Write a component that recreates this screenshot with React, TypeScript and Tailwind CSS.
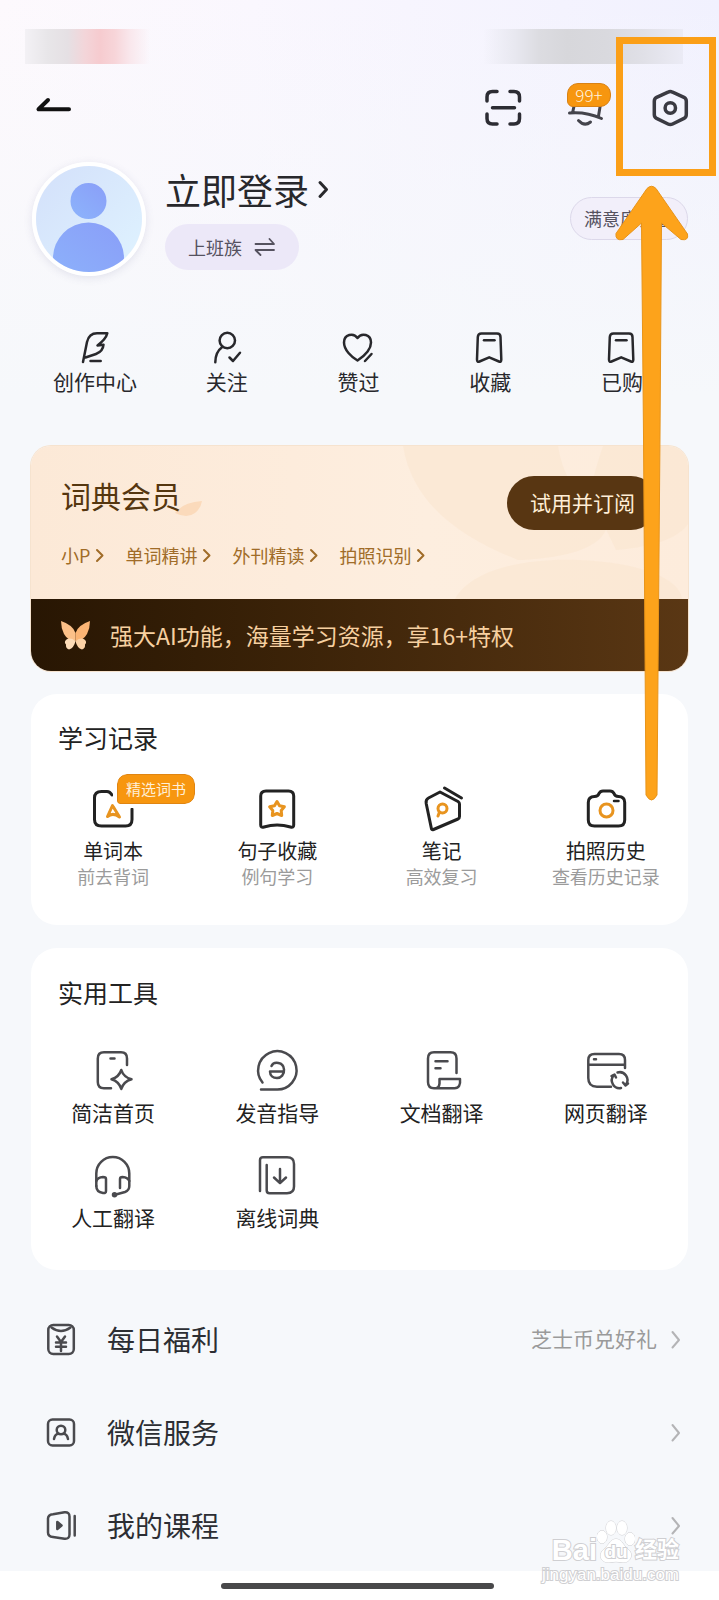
import type { ReactNode } from "react";

type IconProps = {
  size: number;
  stroke?: number;
  className?: string;
  children: ReactNode;
};

function Icon({ size, stroke = 2, className = "", children }: IconProps) {
  return (
    <svg
      width={size}
      height={size}
      viewBox={`0 0 ${size} ${size}`}
      fill="none"
      stroke="currentColor"
      strokeWidth={stroke}
      strokeLinecap="round"
      strokeLinejoin="round"
      aria-hidden="true"
      className={`shrink-0 overflow-visible ${className}`}
    >
      {children}
    </svg>
  );
}

const bookmark = (
  <Icon size={36} stroke={2.5}>
    <path d="M9.500 3.500H25Q28.500 3.500 28.500 7L29.300 29.500Q29.300 32.500 27 31.500L17.200 27.300L7.500 31.500Q5 32.500 5 29.500L5.800 7Q6 3.500 9.500 3.500Z" />
    <path d="M12 10.300H22.500" />
  </Icon>
);

const shortcuts = [
  {
    label: "创作中心",
    icon: (
      <Icon size={36} stroke={2.5}>
        <path d="M6 32L10 12Q12 3.300 20 3.300H30.300Q29 9 20.500 15.500L26.500 14.700Q26 21.500 19 24L8.500 27.500" />
        <path d="M13.500 31H23.700" />
      </Icon>
    ),
  },
  {
    label: "关注",
    icon: (
      <Icon size={36} stroke={2.5}>
        <circle cx="18.300" cy="10.500" r="7.700" />
        <path d="M13 17.300Q6.500 22 6.300 32.300M20.500 27.500L24 31L31 22.700" />
      </Icon>
    ),
  },
  {
    label: "赞过",
    icon: (
      <Icon size={36} stroke={2.5}>
        <path d="M17.500 30.500C11.500 27 4 20 4 12.500C4 4.300 13.500 2.300 17.500 8C21.500 2.300 31 4.300 31 12.500C31 20 23.500 26.500 17.500 30.500Z" />
        <path d="M25 31L31.500 24" />
      </Icon>
    ),
  },
  { label: "收藏", icon: bookmark },
  { label: "已购", icon: bookmark },
];

const memberLinks = ["小P", "单词精讲", "外刊精读", "拍照识别"];

const records = [
  {
    label: "单词本",
    hint: "前去背词",
    badge: "精选词书",
    icon: (
      <Icon size={44} stroke={3}>
        <path d="M21 8Q19 4.500 16 4.500H10.500Q3.500 4.500 3.500 11V32.500Q3.500 39 10.500 39H34.500Q41 39 41 32.500V22" />
        <path d="M16.500 29.500L21.500 18.500L28.500 30Q22 25 16.500 29.500Z" className="stroke-[#e8941f]" />
      </Icon>
    ),
  },
  {
    label: "句子收藏",
    hint: "例句学习",
    icon: (
      <Icon size={44} stroke={3}>
        <path d="M11 4H33.500Q38.700 4 38.700 9V38Q38.700 41 35.500 40Q22 36 9 40Q5.700 41 5.700 38V9Q5.700 4 11 4Z" />
        <path
          d="M22 14.500L24.500 18.800L29.400 19.800L26.200 23.500L26.700 28.500L22 26.500L17.300 28.500L17.800 23.500L14.600 19.800L19.500 18.800Z"
          className="stroke-[#e8941f]"
        />
      </Icon>
    ),
  },
  {
    label: "笔记",
    hint: "高效复习",
    icon: (
      <Icon size={44} stroke={3}>
        <path d="M20 5L38 14.500Q39.500 15.500 39.500 17V29.500Q39.500 31.500 38 32L13.500 42.500Q11.500 43.200 11.300 41L6.200 16.500Q5.500 12.500 8.500 11Z" />
        <path d="M24.500 1L41.500 11" />
        <circle cx="22.500" cy="21.500" r="4.500" className="stroke-[#e8941f]" />
        <path d="M19.500 25L18 29" className="stroke-[#e8941f]" />
      </Icon>
    ),
  },
  {
    label: "拍照历史",
    hint: "查看历史记录",
    icon: (
      <Icon size={44} stroke={3}>
        <path d="M10.500 9.500Q14 9.500 15 6.500Q16.200 4 19 4H26Q28.800 4 30 6.500Q31 9.500 34.500 9.500Q40.700 9.500 40.700 15.500V33Q40.700 39 34.500 39H10.500Q4.300 39 4.300 33V15.500Q4.300 9.500 10.500 9.500Z" />
        <circle cx="22.500" cy="23.500" r="6.500" className="stroke-[#e8941f]" />
        <path d="M30 14H34.500" strokeWidth="2.500" />
      </Icon>
    ),
  },
];

const tools = [
  {
    label: "简洁首页",
    icon: (
      <Icon size={44} stroke={2.5}>
        <path d="M36 17V10.500Q36 4.300 30 4.300H13Q6.800 4.300 6.800 10.500V34Q6.800 40.200 13 40.200H20M19.500 10.500H23.500" />
        <path d="M30.300 22Q32.500 29 40.500 31.300Q32.500 33.600 30.300 41Q28 33.600 20.500 31.300Q28 29 30.300 22Z" />
      </Icon>
    ),
  },
  {
    label: "发音指导",
    icon: (
      <Icon size={44} stroke={2.5}>
        <path d="M7.500 34.500A19.200 19.200 0 1 1 21.800 41.500H6" />
        <path d="M16.500 18C18.500 13.300 28.500 13.500 29 21.500C29.500 26.500 26 30 22 30C18 30 15 27.500 15 23.500H28.500" />
      </Icon>
    ),
  },
  {
    label: "文档翻译",
    icon: (
      <Icon size={44} stroke={2.5}>
        <path d="M36.500 25V10.500Q36.500 4.300 30.500 4.300H14Q8 4.300 8 10.500V34Q8 40.200 14 40.200H34.500Q41 40.200 40 31H19.500V35.500Q19 40 16 40.200" />
        <path d="M15.500 13.300H27.500M15.500 20.300H20.500" />
      </Icon>
    ),
  },
  {
    label: "网页翻译",
    icon: (
      <Icon size={44} stroke={2.5}>
        <path d="M41 20V12Q41 6 35 6H10.500Q4.300 6 4.300 12V30Q4.300 38.700 13 38.700H27M4.300 16.700H41M10 11.300H12" />
        <path d="M29.500 27.500A7.800 7.800 0 0 0 37 40M33.500 24.500A7.800 7.800 0 0 1 42 36.500" />
        <path d="M27.500 28L30.500 26.500L32 29.500M44 35.500L41.500 37.500L39 34.500" />
      </Icon>
    ),
  },
  {
    label: "人工翻译",
    icon: (
      <Icon size={44} stroke={2.5}>
        <path d="M5.300 33V20.500A16.500 16.500 0 0 1 38.300 20.500V33Q38.300 37.500 34 39L24 41.700" />
        <path d="M5.300 28Q6.500 24.500 12 24Q15 24 15 26V38Q15 40.500 12 40Q5.300 39 5.300 33M29 35V26Q29 24 31.500 24Q37 24.500 38.300 28" />
        <circle cx="23.500" cy="41.700" r="1.500" fill="currentColor" />
      </Icon>
    ),
  },
  {
    label: "离线词典",
    icon: (
      <Icon size={44} stroke={2.5}>
        <path d="M5 38V7Q5 4.300 8 4.300H32Q39 4.300 39 11V33.500Q39 40.200 32 40.200H14.500Q11.700 40.200 11.700 37.500V12" />
        <path d="M25 16V30M19 24.500L25 30.200L31 24.500" />
      </Icon>
    ),
  },
];

const menu = [
  {
    label: "每日福利",
    note: "芝士币兑好礼",
    icon: (
      <Icon size={32} stroke={2.5}>
        <rect x="3.300" y="2" width="25.500" height="29" rx="5" />
        <path d="M6.500 4.500Q16 11.500 25.500 4.500M12 13.500L16 19L20 13.500M11 19.500H21M11 23.700H21M16 19V28" />
      </Icon>
    ),
  },
  {
    label: "微信服务",
    icon: (
      <Icon size={32} stroke={2.5}>
        <rect x="3" y="3.500" width="26" height="26" rx="4.500" />
        <circle cx="16" cy="14" r="4.300" />
        <path d="M9 23Q10 18 13.500 17.800M23 23Q22 18 18.500 17.800" />
      </Icon>
    ),
  },
  {
    label: "我的课程",
    icon: (
      <Icon size={32} stroke={2.5}>
        <path d="M8 5.200L19.500 3.300Q24.500 2.800 24.500 7.500V25.500Q24.500 30.200 19.500 29.700L8 28Q3 27.500 3 23.500V9.500Q3 5.800 8 5.200ZM29.700 7V26.500" />
        <path d="M12.300 13L16.500 16.500L12.300 20Z" fill="currentColor" />
      </Icon>
    ),
  },
];

function SectionTitle({ children }: { children: ReactNode }) {
  return <h2 className="px-[27px] text-[25px] leading-[30px] text-[#222]">{children}</h2>;
}

function StatusBar() {
  return (
    <div className="flex justify-between px-[25px] pt-[29px]">
      <div className="h-[35px] w-[125px] bg-[linear-gradient(90deg,#f3f1f5_0%,#e8e6e9_18%,#e5e0e4_34%,#f3d5d9_48%,#f6cbcf_60%,#f7d5d9_72%,#f9e7ec_84%,transparent_100%)]" />
      <div className="mr-[11px] h-[35px] w-[200px] bg-[linear-gradient(90deg,transparent_0%,#e8e8f0_16%,#dcdce1_28%,#d7d7db_42%,#d9d9de_62%,#e0e0e7_80%,#ebebf5_100%)]" />
    </div>
  );
}

function TopBar() {
  return (
    <header className="flex h-[88px] items-center justify-between pr-[29px] pl-[36px]">
      <button type="button" aria-label="返回" className="text-[#111]">
        <Icon size={36} stroke={4}>
          <path d="M12 10L2.500 19.300H33" />
        </Icon>
      </button>
      <div className="flex items-center gap-[42px]">
        <button type="button" aria-label="扫一扫" className="text-[#2c2c33]">
          <Icon size={40} stroke={3.5}>
            <path d="M3 13V9Q3 3.500 8.500 3.500H13M26 3.500H30Q35.500 3.500 35.500 9V13M35.500 26V30.500Q35.500 36 30 36H26M13 36H8.500Q3 36 3 30.500V26M8.500 19.700H30.500" />
          </Icon>
        </button>
        <button type="button" aria-label="消息" className="relative text-[#44444c]">
          <Icon size={44} stroke={3}>
            <path d="M8.500 18L6.500 27M34.500 18L32.500 30M3.500 27Q20 25.500 35.500 32.500M12.500 34.500Q18.500 41 24.500 36" />
          </Icon>
          <span className="absolute -top-[3px] left-px h-6 w-11 rounded-[11px] rounded-bl-[6px] border border-[#d98214] bg-[#f7960f] text-center text-[17px] leading-[22px] font-light text-[#fff3df]">
            99+
          </span>
        </button>
        <button type="button" aria-label="设置" className="text-[#3a3a42]">
          <Icon size={38} stroke={3.5}>
            <path d="M16 3.200Q18.300 2 20.600 3.200L32 8.300Q34.300 9.500 34.300 12.200V25.500Q34.300 28.200 32 29.400L20.600 35Q18.300 36.200 16 35L4.600 29.400Q2.300 28.200 2.300 25.500V12.200Q2.300 9.500 4.600 8.300Z" />
            <circle cx="18.300" cy="19" r="5.200" />
          </Icon>
        </button>
      </div>
    </header>
  );
}

function Profile() {
  return (
    <section className="flex items-start pt-[10px] pr-[31px] pl-[32px]">
      <div className="size-[114px] shrink-0 overflow-hidden rounded-full border-4 border-white shadow-[0_2px_8px_rgba(90,90,140,0.14)]">
        <svg viewBox="0 0 106 106" className="size-full" role="img" aria-label="头像">
          <defs>
            <linearGradient id="sky" x1="0" y1="0" x2="1" y2="1">
              <stop offset="0" stopColor="#d3e0fa" />
              <stop offset="1" stopColor="#dff3ff" />
            </linearGradient>
            <linearGradient id="person" x1="1" y1="0" x2="0.200" y2="1">
              <stop offset="0" stopColor="#8a9ef8" />
              <stop offset="1" stopColor="#8cb2fb" />
            </linearGradient>
          </defs>
          <rect width="106" height="106" fill="url(#sky)" />
          <circle cx="52.500" cy="35" r="18" fill="url(#person)" />
          <circle cx="52.500" cy="92" r="35.500" fill="url(#person)" />
        </svg>
      </div>
      <div className="ml-[19px] flex grow flex-col items-start gap-[8px]">
        <button type="button" className="flex h-[54px] items-center gap-[7px] text-[36px] leading-[54px] text-[#28282c]">
          立即登录
          <Icon size={16} stroke={3}>
            <path d="M4 1.500L10.500 8.500L4 15.500" />
          </Icon>
        </button>
        <button
          type="button"
          className="flex h-[46px] items-center gap-3 rounded-full bg-[#ece8f8] px-[23px] text-[18px] text-[#55525f]"
        >
          上班族
          <Icon size={22} stroke={1.8}>
            <path d="M1.500 8H20L15.500 3M20 14H1.500L6.500 19" />
          </Icon>
        </button>
      </div>
      <button
        type="button"
        className="mt-[35px] h-[43px] rounded-full border border-[#dcd8ea] bg-[#f2effa] px-[13px] text-[18px] text-[#55525f]"
      >
        满意度调查
      </button>
    </section>
  );
}

function Member() {
  return (
    <section className="mx-[31px] mt-[50px] overflow-hidden rounded-[20px] shadow-[0_0_0_1px_#f6e3cf]">
      <div className="relative h-[153px] bg-[linear-gradient(90deg,#fce9d7_0%,#fdecdc_40%,#fdeedf_60%,#fdecdc_100%)] px-[30px] pt-[26px]">
        <svg
          viewBox="0 0 290 153"
          aria-hidden="true"
          className="absolute top-0 right-0 h-full w-[290px]"
          fill="#fae6d0"
          fillOpacity="0.600"
        >
          <path d="M5 0C15 60 65 92 120 114C170 112 225 100 205 60C175 50 165 28 160 0Z" />
          <path d="M205 0C200 15 195 30 192 50L218 104C262 100 282 90 290 78V0Z" />
          <path d="M57 153C70 128 115 112 180 114C240 116 282 132 284 153Z" />
        </svg>
        <div className="relative flex items-start justify-between">
          <div>
            <h2 className="relative w-fit text-[30px] leading-[46px] text-[#55360f]">
              <svg
                width="28"
                height="18"
                viewBox="0 0 28 18"
                aria-hidden="true"
                className="absolute -right-[22px] bottom-0"
              >
                <path d="M0 13Q8 2 27 1Q26 8 20 13Q12 19 0 13Z" fill="#fbdabb" />
              </svg>
              <span className="relative">词典会员</span>
            </h2>
            <div className="mt-[23px] flex gap-5">
              {memberLinks.map((name) => (
                <a key={name} href="#" className="flex items-center gap-[5px] text-[18px] leading-[28px] text-[#a06c28]">
                  {name}
                  <Icon size={10} stroke={2}>
                    <path d="M2 0L7.500 5.500L2 11" />
                  </Icon>
                </a>
              ))}
            </div>
          </div>
          <button
            type="button"
            className="mt-[4px] h-[54px] rounded-full bg-[#583612] px-[23px] text-[21px] text-[#ffeed6]"
          >
            试用并订阅
          </button>
        </div>
      </div>
      <a
        href="#"
        className="flex h-[72px] items-center gap-[19px] bg-linear-to-r from-[#281603] to-[#5a3714] pl-[29px] text-[23px] text-[#f7d0a0]"
      >
        <svg width="31" height="30" viewBox="0 0 31 30" aria-hidden="true" className="shrink-0">
          <path d="M1 1Q13 5 15.500 13V21Q8 21 4 14Q1 8 1 1Z" fill="#fcc088" />
          <path d="M30 1Q18 5 15.500 13V21Q23 21 27 14Q30 8 30 1Z" fill="#fbb474" />
          <path d="M15.500 21Q10 17 6.500 19.500Q3.500 22 6 24.500Q5.500 28.500 9 29.500Q14 28 15.500 21Z" fill="#fddcb8" />
          <path d="M15.500 21Q21 17 24.500 19.500Q27.500 22 25 24.500Q25.500 28.500 22 29.500Q17 28 15.500 21Z" fill="#fcd2a6" />
        </svg>
        强大AI功能，海量学习资源，享16+特权
      </a>
    </section>
  );
}

function Watermark() {
  return (
    <div className="absolute right-[40px] bottom-[15px] font-['Liberation_Sans','Noto_Sans_CJK_SC',sans-serif] text-white [paint-order:stroke_fill] [-webkit-text-stroke:2px_#cfcfd2]">
      <div className="flex items-end justify-end text-[29px] leading-[30px] font-bold">
        <span>Bai</span>
        <svg width="38" height="44" viewBox="0 0 38 44" aria-hidden="true" className="mb-px" fill="#fff" stroke="#cfcfd2" strokeWidth="1">
          <ellipse cx="5" cy="17" rx="5" ry="6.500" />
          <ellipse cx="14" cy="8" rx="5" ry="7" />
          <ellipse cx="25" cy="8" rx="5" ry="7" />
          <ellipse cx="33" cy="19" rx="5" ry="6.500" />
          <path d="M19 19C25 19 27 27 32 30C37 35 33 43 26 42.500Q19 41 12 42.500C4 43 1 35 6 30C11 27 13 19 19 19Z" />
          <text x="19" y="38" textAnchor="middle" fontSize="19" fontWeight="700" strokeWidth="2">
            du
          </text>
        </svg>
        <span className="text-[22px]">经验</span>
      </div>
      <div className="text-right text-[17px] leading-[20px]">jingyan.baidu.com</div>
    </div>
  );
}

export default function App() {
  return (
    <div className="relative flex min-h-screen flex-col overflow-hidden bg-[#f6f8fb] font-['Noto_Sans_CJK_SC',sans-serif] text-[#222]">
      <div className="bg-[linear-gradient(180deg,transparent_0%,#f6f8fb_100%),linear-gradient(90deg,#fdf9fd_0%,#faf7fe_35%,#f1f1fe_100%)]">
        <StatusBar />
        <TopBar />
        <Profile />
        <nav className="mt-[54px] grid grid-cols-5 pr-[31px] pl-[29px]">
          {shortcuts.map((item) => (
            <a key={item.label} href="#" className="flex flex-col items-center text-[21px] leading-[30px] text-[#28282c]">
              {item.icon}
              {item.label}
            </a>
          ))}
        </nav>
      </div>

      <main className="grow">
        <Member />

        <section className="mx-[31px] mt-[23px] rounded-[26px] bg-white pt-[28px] pb-[38px]">
          <SectionTitle>学习记录</SectionTitle>
          <div className="mt-[35px] grid grid-cols-4">
            {records.map((item) => (
              <a key={item.label} href="#" className="relative flex flex-col items-center">
                {item.icon}
                {item.badge && (
                  <span className="absolute -top-[13px] left-1/2 ml-1 h-[30px] w-[78px] rounded-[10px] rounded-bl-[3px] border border-[#e08512] bg-[#f7960f] text-center text-[15px] leading-[28px] text-[#ffefd8] outline-4 outline-white">
                    {item.badge}
                  </span>
                )}
                <span className="mt-[6px] text-[20px] leading-[28px]">{item.label}</span>
                <span className="text-[18px] leading-[22px] text-[#9b9b9b]">{item.hint}</span>
              </a>
            ))}
          </div>
        </section>

        <section className="mx-[31px] mt-[23px] rounded-[26px] bg-white pt-[29px] pb-[39px]">
          <SectionTitle>实用工具</SectionTitle>
          <div className="mt-[41px] grid grid-cols-4 gap-y-[27px]">
            {tools.map((item) => (
              <a key={item.label} href="#" className="flex flex-col items-center text-[#4a4a4e]">
                {item.icon}
                <span className="mt-[6px] text-[21px] leading-[28px] text-[#222]">{item.label}</span>
              </a>
            ))}
          </div>
        </section>

        <ul className="mt-[22px] pr-[38px] pl-[45px]">
          {menu.map((item) => (
            <li key={item.label}>
              <a href="#" className="flex h-[93px] items-center text-[#4a4a4e]">
                {item.icon}
                <span className="ml-[30px] grow text-[28px] text-[#2c2e33]">{item.label}</span>
                <span className="mr-[10px] text-[21px] text-[#9a9a9a]">{item.note}</span>
                <Icon size={14} stroke={2} className="text-[#b4b4b6]">
                  <path d="M5.500 0L12 8L5.500 15.500" />
                </Icon>
              </a>
            </li>
          ))}
        </ul>
      </main>

      <footer className="flex h-[29px] items-center justify-center bg-white pr-1">
        <div className="h-[6px] w-[273px] rounded-full bg-[#48484a]" />
      </footer>

      <Watermark />

      {/* callout around the settings button */}
      <div className="pointer-events-none absolute top-[37px] right-[3px] h-[139px] w-[100px] border-[7px] border-[#fb9f17]" />
      <svg
        width="74"
        height="616"
        viewBox="0 0 74 616"
        aria-hidden="true"
        className="pointer-events-none absolute top-[185px] right-[30px]"
      >
        <path
          d="M32 3.500Q36.500 -1 41 3.500L72.500 49Q74 56 66 54.500L46.500 38L45 250L42 610Q36.500 620 31 610L28.500 250L26.500 38L8 54.500Q0 56 1 48.500Z"
          fill="#fda31b"
          stroke="#e8941a"
          strokeWidth="1"
        />
      </svg>
    </div>
  );
}
